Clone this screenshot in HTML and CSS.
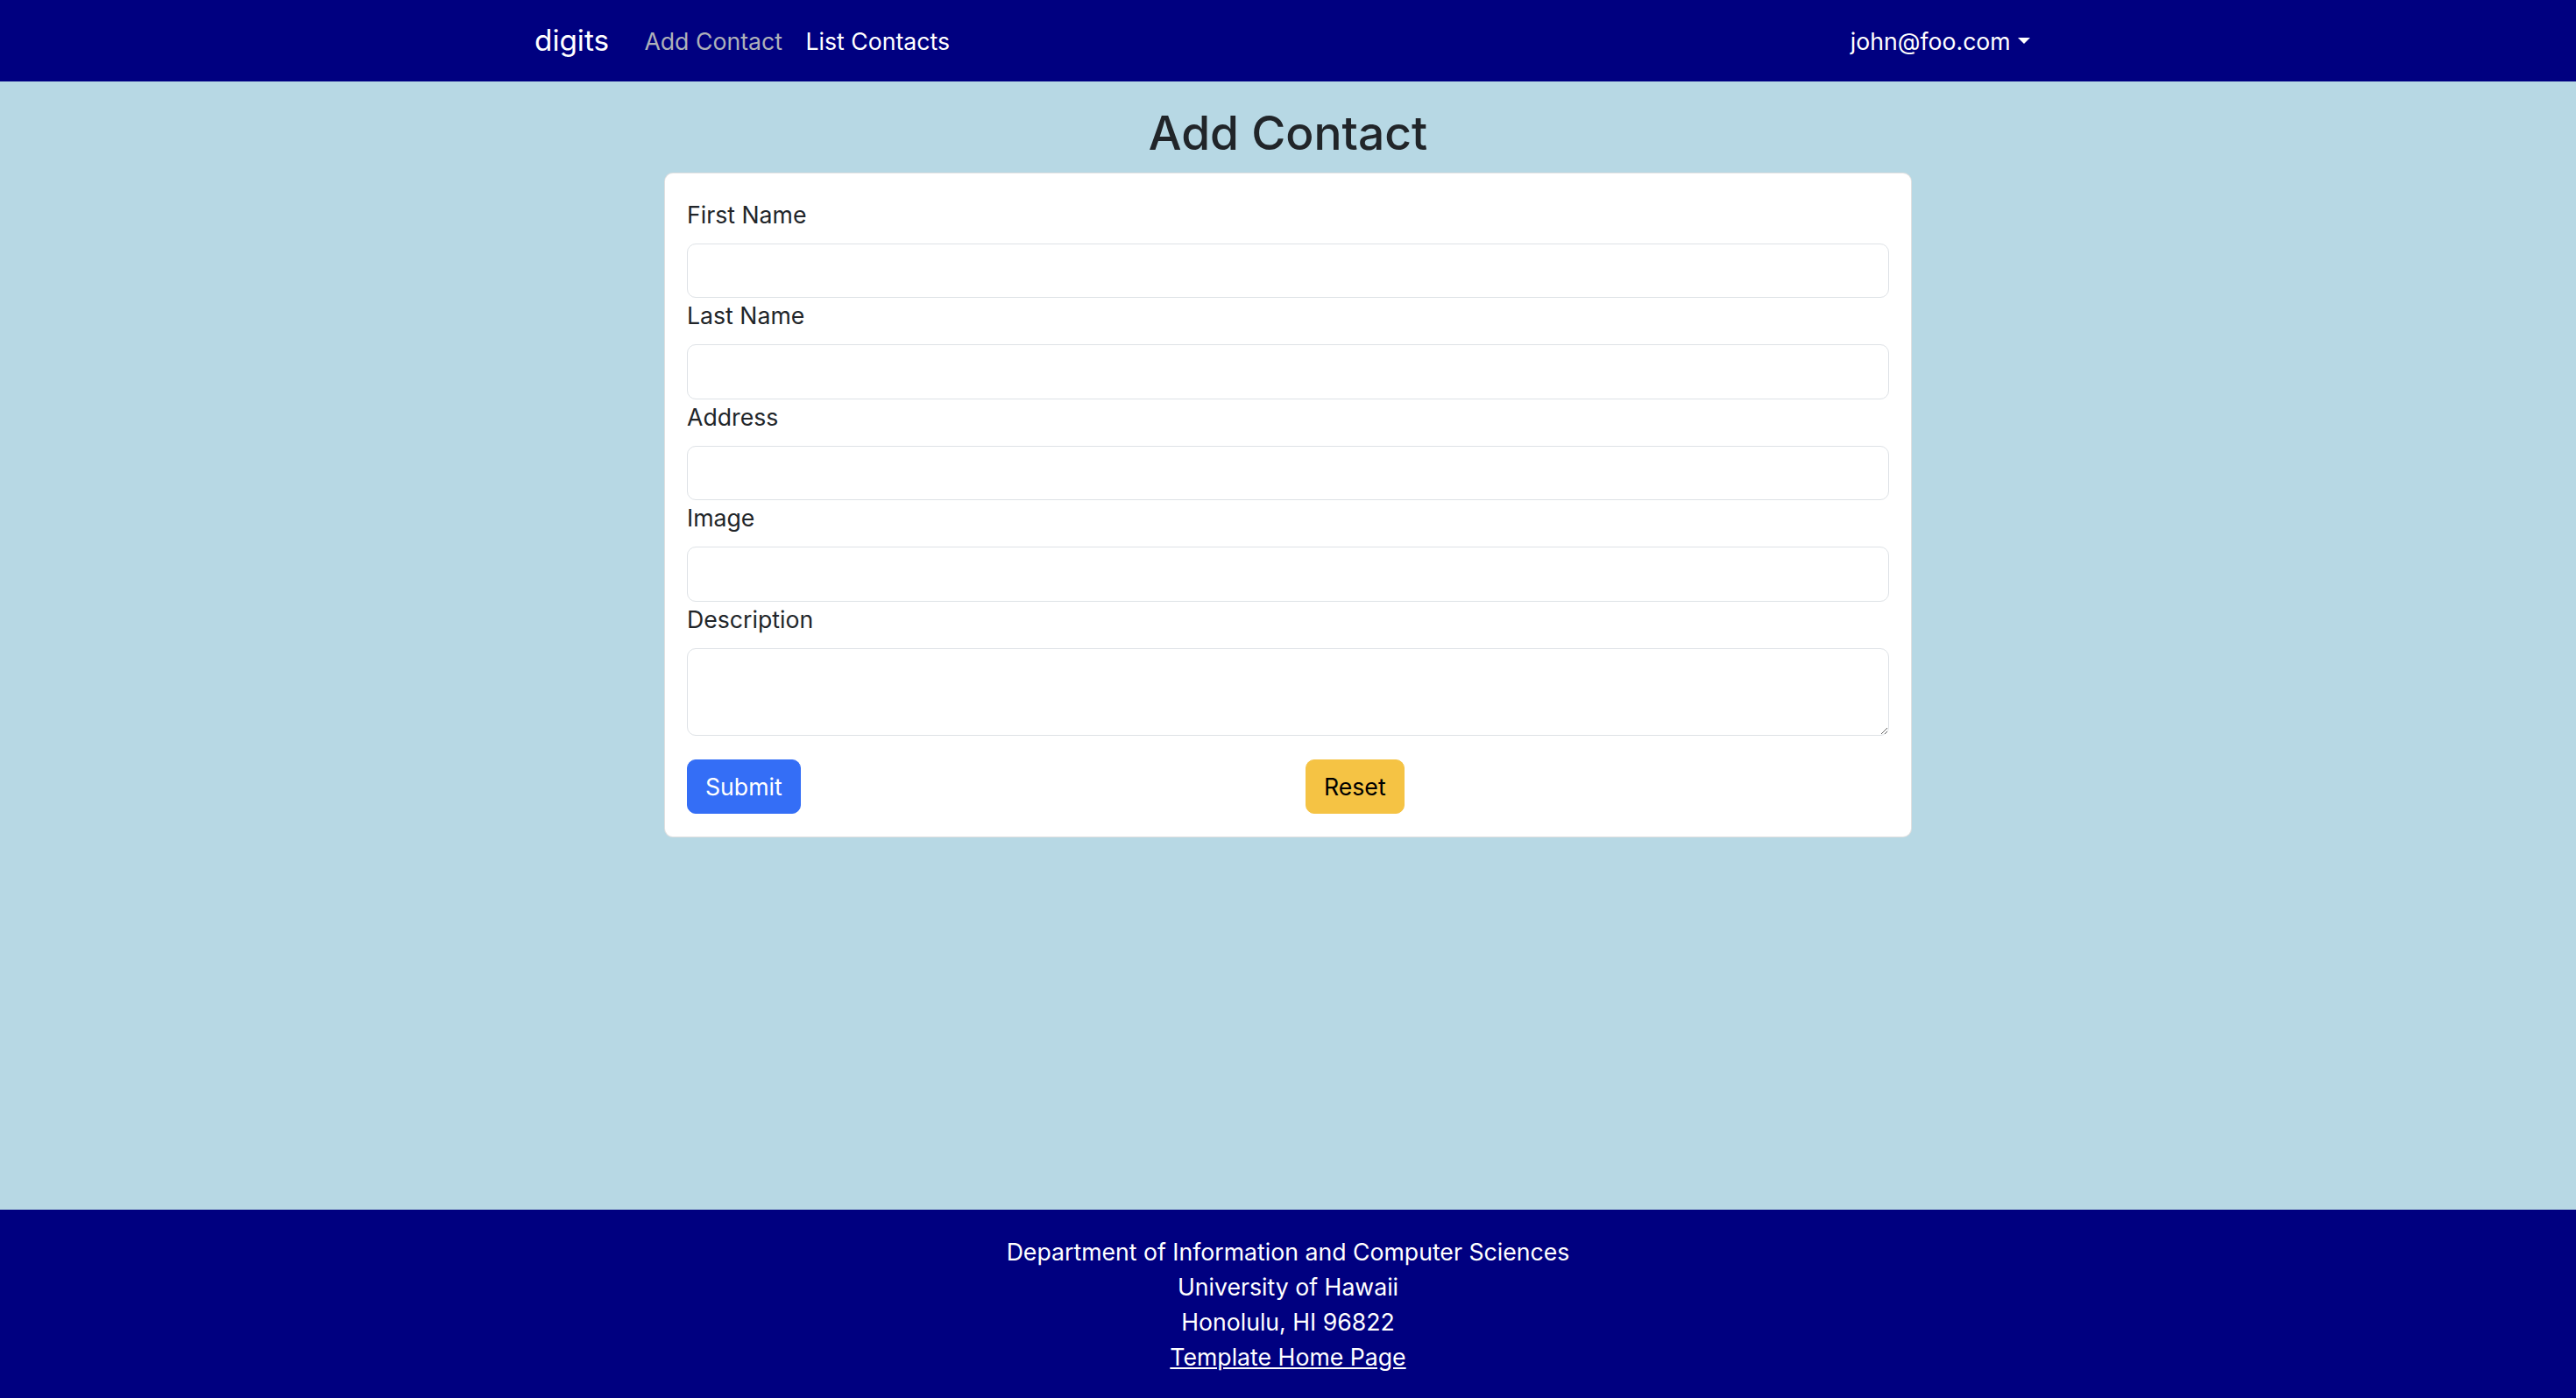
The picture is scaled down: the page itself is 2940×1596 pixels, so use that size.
FILE: index.html
```html
<!DOCTYPE html>
<html lang="en">
<head>
<meta charset="utf-8">
<title>digits - Add Contact</title>
<link rel="stylesheet" href="styles.css">
</head>
<body class="page">
  <nav class="navbar">
    <div class="nav-inner">
      <a class="brand" href="#">digits</a>
      <ul class="nav-links">
        <li><a class="nav-link nav-link-muted" href="#">Add Contact</a></li>
        <li><a class="nav-link" href="#">List Contacts</a></li>
      </ul>
      <div class="nav-right">
        <a class="nav-link dropdown-toggle" href="#">john@foo.com</a>
      </div>
    </div>
  </nav>

  <main class="main">
    <h2 class="title">Add Contact</h2>
    <form class="card">
      <label class="field-label" for="firstName">First Name</label>
      <input class="field-input" id="firstName" type="text">
      <label class="field-label" for="lastName">Last Name</label>
      <input class="field-input" id="lastName" type="text">
      <label class="field-label" for="address">Address</label>
      <input class="field-input" id="address" type="text">
      <label class="field-label" for="image">Image</label>
      <input class="field-input" id="image" type="text">
      <label class="field-label" for="description">Description</label>
      <textarea class="field-input field-textarea" id="description" rows="2"></textarea>
      <div class="actions">
        <div class="action-cell">
          <button class="btn btn-primary" type="button">Submit</button>
        </div>
        <div class="action-cell action-cell-right">
          <button class="btn btn-warning" type="button">Reset</button>
        </div>
      </div>
    </form>
  </main>

  <footer class="footer">
    <div>Department of Information and Computer Sciences</div>
    <div>University of Hawaii</div>
    <div>Honolulu, HI 96822</div>
    <div><a class="footer-link" href="#">Template Home Page</a></div>
  </footer>
</body>
</html>
```

FILE: styles.css
```css
html, body {
  margin: 0;
  padding: 0;
}

.page {
  min-height: 100vh;
  display: flex;
  flex-direction: column;
  background: #b7d8e4;
  font-family: Inter, "Noto Sans", "Liberation Sans", sans-serif;
  font-size: 26.67px;
  line-height: 1.5;
  color: #212529;
}

/* ---------- Navbar ---------- */
.navbar {
  background: #000080;
  height: 93px;
  flex-shrink: 0;
}

.nav-inner {
  width: 1720px;
  margin: 0 auto;
  height: 100%;
  display: flex;
  align-items: center;
}

.brand {
  color: #ffffff;
  text-decoration: none;
  font-size: 33.3px;
  line-height: 1.5;
  margin-right: 27px;
}

.nav-links {
  list-style: none;
  margin: 0;
  padding: 0;
  display: flex;
  align-items: center;
}

.nav-link {
  display: block;
  color: #ffffff;
  text-decoration: none;
  padding: 0 13.3px;
  line-height: 40px;
}

.nav-link-muted {
  color: #aeb1b9;
}

.nav-right {
  margin-left: auto;
}

.dropdown-toggle::after {
  content: "";
  display: inline-block;
  margin-left: 8px;
  vertical-align: 7px;
  border-top: 7px solid #ffffff;
  border-right: 7px solid transparent;
  border-left: 7px solid transparent;
}

/* ---------- Main ---------- */
.main {
  flex: 1 0 auto;
  padding-top: 27px;
}

.title {
  margin: 0 0 13px;
  text-align: center;
  font-size: 53.3px;
  font-weight: 500;
  line-height: 1.2;
  color: #212529;
}

.card {
  box-sizing: border-box;
  width: 1424px;
  margin: 0 auto;
  background: #ffffff;
  border: 1px solid rgba(0, 0, 0, 0.12);
  border-radius: 10px;
  padding: 27px 25px 25.5px;
  display: flex;
  flex-direction: column;
}

.field-label {
  display: block;
  margin-bottom: 13px;
  line-height: 40px;
}

.field-input {
  box-sizing: border-box;
  display: block;
  width: 100%;
  height: 62.5px;
  margin: 0;
  padding: 10px 20px;
  font-family: inherit;
  font-size: 26.67px;
  line-height: 1.5;
  color: #212529;
  background: #ffffff;
  border: 1px solid #dee2e6;
  border-radius: 10px;
  outline: none;
}

.field-textarea {
  height: 100px;
  resize: vertical;
}

.actions {
  display: grid;
  grid-template-columns: 1fr 1fr;
  margin-top: 27px;
}

.action-cell-right {
  padding-left: 20px;
}

.btn {
  box-sizing: border-box;
  height: 62.5px;
  padding: 0 20px;
  font-family: inherit;
  font-size: 26.67px;
  line-height: 1.5;
  border-radius: 10px;
  border: 1px solid transparent;
  cursor: pointer;
}

.btn-primary {
  background: #346ef6;
  border-color: #346ef6;
  color: #ffffff;
}

.btn-warning {
  background: #f5c344;
  border-color: #f5c344;
  color: #000000;
}

/* ---------- Footer ---------- */
.footer {
  flex-shrink: 0;
  background: #000080;
  color: #ffffff;
  text-align: center;
  padding: 28px 0 27.5px;
  line-height: 40px;
}

.footer-link {
  color: #ffffff;
  text-decoration: underline;
}
```
